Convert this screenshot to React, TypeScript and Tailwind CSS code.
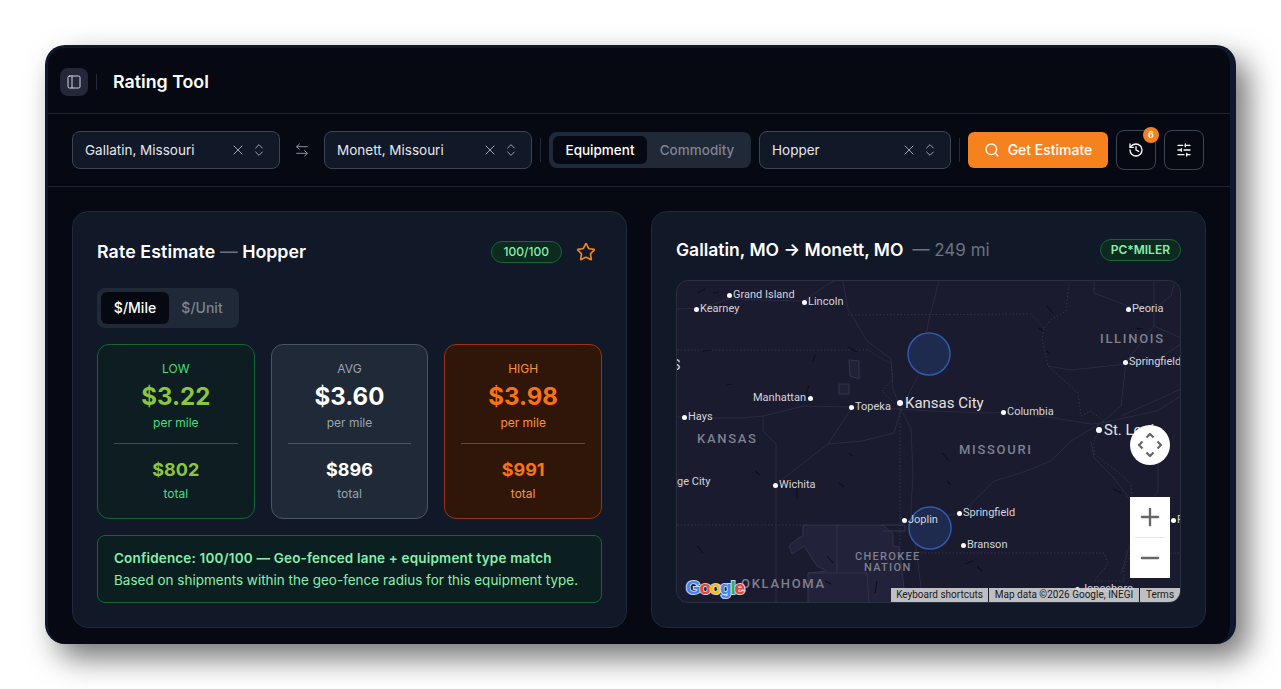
import {
  ArrowLeftRight,
  ChevronsUpDown,
  History,
  Minus,
  PanelLeft,
  Plus,
  Search,
  SlidersHorizontal,
  Star,
  X,
} from "lucide-react";

const cities = [
  { name: "Grand Island", x: 53, y: 14 },
  { name: "Lincoln", x: 128, y: 21 },
  { name: "Kearney", x: 20, y: 28 },
  { name: "Peoria", x: 452, y: 28 },
  { name: "Springfield", x: 449, y: 81 },
  { name: "Topeka", x: 175, y: 126 },
  { name: "Columbia", x: 327, y: 131 },
  { name: "Hays", x: 8, y: 136 },
  { name: "Wichita", x: 99, y: 204 },
  { name: "Joplin", x: 228, y: 239 },
  { name: "Springfield", x: 283, y: 232 },
  { name: "Branson", x: 287, y: 264 },
  { name: "F", x: 497, y: 239 },
  { name: "Jonesboro", x: 401, y: 308 },
];

const states = [
  { name: "ILLINOIS", x: 423, y: 58 },
  { name: "KANSAS", x: 20, y: 158 },
  { name: "MISSOURI", x: 282, y: 169 },
  { name: "OKLAHOMA", x: 64, y: 303 },
];

const roads = [
  "M0 28 L25 27 L51 18 L127 20 L151 3 L158 0",
  "M166 0 L171 28 L190 60 L214 78 L216 108 L224 128",
  "M0 136 L37 137 L64 137 L86 135 L127 125 L174 126 L224 128",
  "M86 135 L86 150 L99 163 L99 203 L99 323",
  "M99 203 L151 163 L174 128",
  "M151 163 L185 160 L217 152 L224 128",
  "M224 128 L234 148 L236 193 L234 227 L246 323",
  "M224 128 L241 95 L252 38 L262 0",
  "M224 128 L254 130 L314 132 L333 131 L377 137 L414 143 L424 142",
  "M424 142 L480 130 L504 115",
  "M424 142 L444 125 L449 81 L477 45 L504 57",
  "M371 85 L394 89 L449 83 L481 78 L504 63",
  "M417 0 L417 12 L451 25 L477 28 L494 15 L498 0",
  "M477 0 L477 45",
  "M234 240 L284 232 L304 213 L317 200 L344 192 L374 180 L394 160 L424 142",
  "M414 160 L417 177 L437 197 L454 220",
  "M481 165 L481 210 L474 220 L454 260 L444 293",
  "M504 108 L444 135",
];

const borders = [
  "M0 69 L191 69 L205 78 L214 82 L216 98 L205 110 L220 125",
  "M171 34 L354 33 L367 47 L365 58 L371 85 L401 112 L404 135 L414 130 L427 140",
  "M367 47 L375 38 L389 30 L392 2",
  "M223 128 L223 272",
  "M0 244 L126 244",
  "M216 272 L427 272 L431 283 L417 300 L447 300 L447 287 L454 273 L504 272",
  "M427 140 L417 160 L417 173 L440 190 L454 203 L455 215",
];

const marks = [
  "M20 12 L28 8", "M36 12 L42 11", "M25 70 L34 69", "M171 66 L180 71", "M136 80 L138 74",
  "M50 104 L55 103", "M132 105 L129 112 L134 120", "M370 25 L376 32", "M362 47 L366 50",
  "M370 70 L373 73", "M466 22 L464 35", "M458 47 L466 48", "M78 190 L83 194", "M120 203 L120 218",
  "M20 265 L26 272", "M162 202 L167 206", "M175 175 L172 172", "M150 275 L156 282",
  "M148 300 L154 303", "M194 277 L190 290", "M200 300 L198 312", "M270 200 L274 204",
  "M265 172 L272 180", "M300 285 L305 290", "M296 280 L288 283", "M436 208 L444 212",
];

function Field({ value, width }: { value: string; width: string }) {
  return (
    <div className={`${width} h-[38px] shrink-0 flex items-center justify-between pl-3 pr-3 rounded-lg border border-[#3d4454] bg-[#111827]`}>
      <span className="text-[13.5px] text-[#e5e7eb]">{value}</span>
      <div className="flex items-center gap-[5px]">
        <X className="w-4 h-4 text-[#9ca3af]" strokeWidth={1.5} />
        <ChevronsUpDown className="w-4 h-4 text-[#9ca3af]" strokeWidth={1.5} />
      </div>
    </div>
  );
}

function RateBox({
  label,
  rate,
  total,
  box,
  labelColor,
  valueColor,
  line,
}: {
  label: string;
  rate: string;
  total: string;
  box: string;
  labelColor: string;
  valueColor: string;
  line: string;
}) {
  return (
    <div className={`flex flex-col items-center rounded-xl border px-4 pt-4 ${box}`}>
      <div className={`text-xs leading-4 ${labelColor}`}>{label}</div>
      <div className={`text-2xl leading-8 mt-1 font-bold ${valueColor}`}>{rate}</div>
      <div className={`text-xs leading-4 mt-[2px] ${labelColor}`}>per mile</div>
      <div className={`w-full h-px mt-3 ${line}`} />
      <div className={`text-lg leading-7 mt-3 font-bold ${valueColor}`}>{total}</div>
      <div className={`text-xs leading-4 mt-[2px] ${labelColor}`}>total</div>
    </div>
  );
}

function Lane() {
  return (
    <div className="relative flex-1 overflow-hidden rounded-xl border border-[#2a3040] bg-[#1a1b2e] font-['Roboto',sans-serif]">
      <svg className="absolute inset-0" width="505" height="323" viewBox="0 0 505 323" fill="none">
        <path
          d="M126 244 L206 244 L216 253 L216 265 L222 266 L229 323 L131 323 L131 292 L150 290 L140 285 L127 265 L115 273 L112 265 L120 258 L126 255 Z"
          fill="#22223a"
          stroke="#32334a"
        />
        <path d="M160 244 L160 292 M131 292 L190 292 L192 323 M205 244 L228 244 L228 250 L206 250" stroke="#32334a" />
        <path d="M172 79 L182 80 L182 98 L173 95 Z M162 103 H172 V113 H162 Z" fill="#202137" stroke="#34354c" />
        {roads.map((d) => (
          <path key={d} d={d} stroke="#2a2b42" />
        ))}
        {borders.map((d) => (
          <path key={d} d={d} stroke="#34354b" strokeDasharray="1.5 2" />
        ))}
        {marks.map((d) => (
          <path key={d} d={d} stroke="#0d0e1c" strokeWidth="1.1" />
        ))}
        <circle cx="252" cy="73" r="21" fill="#1e2a4e" stroke="#2f5aa8" strokeWidth="1.5" />
        <circle cx="253" cy="247" r="21" fill="#1e2a4e" stroke="#2f5aa8" strokeWidth="1.5" />
      </svg>

      {cities.map((c) => (
        <div
          key={c.name + c.x}
          className="absolute flex items-center gap-[1px] -translate-y-1/2 whitespace-nowrap text-[11px] leading-3 text-[#d4d5dc]"
          style={{ left: c.x - 3, top: c.y }}
        >
          <span className="w-[5px] h-[5px] rounded-full bg-white" />
          {c.name}
        </div>
      ))}
      <div className="absolute left-[76px] top-[111px] text-[11px] leading-3 text-[#d4d5dc]">Manhattan</div>
      <span className="absolute left-[131px] top-[115px] w-[5px] h-[5px] rounded-full bg-white" />
      <div className="absolute left-0 top-[195px] text-[11px] leading-3 text-[#d4d5dc]">ge City</div>
      <div className="absolute left-[-5px] top-[76px] text-[14px] leading-4 text-[#d4d5dc]">S</div>

      <div className="absolute left-[220px] top-[114px] flex items-center gap-[2px] whitespace-nowrap text-[15px] leading-4 text-[#e2e3e8]">
        <span className="w-[6px] h-[6px] rounded-full bg-white" />
        Kansas City
      </div>
      <div className="absolute left-[419px] top-[141px] flex items-center gap-[2px] whitespace-nowrap text-[15px] leading-4 text-[#e2e3e8]">
        <span className="w-[6px] h-[6px] rounded-full bg-white" />
        St. Louis
      </div>

      {states.map((s) => (
        <div
          key={s.name}
          className="absolute whitespace-nowrap text-[13px] leading-4 font-medium tracking-[1.7px] text-[#7f8090]"
          style={{ left: s.x, top: s.y - 8 }}
        >
          {s.name}
        </div>
      ))}
      <div className="absolute left-[178px] top-[270px] text-center text-[11px] leading-[11px] font-medium tracking-[1.3px] text-[#7f8090]">
        CHEROKEE
        <br />
        NATION
      </div>

      <div className="absolute left-[9px] top-[295px] font-['Liberation_Sans',sans-serif] text-[19px] leading-6 font-bold tracking-[-1.3px] [-webkit-text-stroke:2px_#c9d2e0] [paint-order:stroke_fill]">
        <span className="text-[#4285f4]">G</span>
        <span className="text-[#ea4335]">o</span>
        <span className="text-[#fbbc05]">o</span>
        <span className="text-[#4285f4]">g</span>
        <span className="text-[#34a853]">l</span>
        <span className="text-[#ea4335]">e</span>
      </div>

      <div className="absolute right-[10px] top-[144px] w-10 h-10 rounded-full bg-white flex items-center justify-center">
        <svg width="24" height="24" viewBox="0 0 24 24" fill="none" stroke="#666" strokeWidth="2.2">
          <path d="M8.5 4.5 L12 1 L15.5 4.5 M8.5 19.5 L12 23 L15.5 19.5 M4.5 8.5 L1 12 L4.5 15.5 M19.5 8.5 L23 12 L19.5 15.5" />
        </svg>
      </div>

      <div className="absolute right-[10px] top-[216px] w-10 h-[81px] bg-white flex flex-col items-center">
        <div className="h-10 flex items-center justify-center">
          <Plus className="w-7 h-7 text-[#666]" strokeWidth={2} />
        </div>
        <div className="w-[30px] h-px bg-[#e6e6e6]" />
        <div className="h-10 flex items-center justify-center">
          <Minus className="w-7 h-7 text-[#666]" strokeWidth={2} />
        </div>
      </div>

      <div className="absolute right-0 bottom-0 h-[14px] flex gap-px text-[10px] leading-[14px] text-[#1a1a1a]">
        <div className="w-[97px] text-center bg-[#d0d0d4]/90">Keyboard shortcuts</div>
        <div className="w-[150px] text-center bg-[#d0d0d4]/90">Map data ©2026 Google, INEGI</div>
        <div className="w-[40px] text-center bg-[#d0d0d4]/90">Terms</div>
      </div>
    </div>
  );
}

export default function App() {
  return (
    <div className="h-[689px] overflow-hidden bg-white pl-[45px] pt-[45px] font-['Inter',sans-serif]">
      <div className="w-[1191px] h-[599px] flex flex-col rounded-[20px] border-t-[3px] border-l-[3px] border-r-[6px] border-[#0f172a] bg-[#060912] text-white shadow-[12px_14px_30px_rgba(0,0,0,0.55)]">
        <header className="h-[66px] shrink-0 flex items-center pl-3 pt-[3px] border-b border-[#1f2433]">
          <button className="w-7 h-7 rounded-lg bg-[#24263a] flex items-center justify-center">
            <PanelLeft className="w-4 h-4 text-[#d1d5db]" strokeWidth={1.5} />
          </button>
          <div className="w-px h-4 mx-2 bg-[#23283a]" />
          <h1 className="ml-2 text-[17.8px] font-semibold">Rating Tool</h1>
        </header>

        <div className="h-[73px] shrink-0 flex items-center gap-2 px-6 border-b border-[#1f2433]">
          <Field value="Gallatin, Missouri" width="w-[208px]" />
          <button className="w-7 h-7 flex items-center justify-center">
            <ArrowLeftRight className="w-4 h-4 text-[#8a91a0]" strokeWidth={1.5} />
          </button>
          <Field value="Monett, Missouri" width="w-[208px]" />
          <div className="w-px h-6 bg-[#23283a]" />
          <div className="w-[202px] h-9 flex items-center p-1 rounded-lg bg-[#1f2937] text-[13.5px] font-medium">
            <div className="w-[94px] h-7 flex items-center justify-center rounded-md bg-[#060912]">Equipment</div>
            <div className="flex-1 text-center text-[#7d8492]">Commodity</div>
          </div>
          <Field value="Hopper" width="w-[192px]" />
          <div className="w-px h-6 bg-[#23283a]" />
          <button className="w-[140px] h-9 flex items-center justify-center gap-2 rounded-md bg-[#f6811f] text-sm font-medium">
            <Search className="w-4 h-4" strokeWidth={2} />
            Get Estimate
          </button>
          <button className="relative w-10 h-10 flex items-center justify-center rounded-lg border border-[#3d4454]">
            <History className="w-4 h-4" strokeWidth={2} />
            <span className="absolute -top-[4px] -right-[4px] w-4 h-4 flex items-center justify-center rounded-full bg-[#f6811f] text-[9px] font-semibold">
              6
            </span>
          </button>
          <button className="w-10 h-10 flex items-center justify-center rounded-lg border border-[#3d4454]">
            <SlidersHorizontal className="w-4 h-4" strokeWidth={2} />
          </button>
        </div>

        <div className="flex-1 grid grid-cols-2 gap-6 px-6 pt-6 pb-4">
          <section className="flex flex-col rounded-2xl border border-[#1e293b] bg-[#111827] p-6">
            <div className="h-8 mb-5 flex items-center justify-between">
              <h2 className="text-[17.8px] font-semibold">
                <span className="tracking-[0.1px]">Rate Estimate</span>{" "}
                <span className="font-normal text-[#6b7280]">—</span> Hopper
              </h2>
              <div className="flex items-center gap-[14px]">
                <span className="h-[22px] px-3 flex items-center rounded-full border border-[#166534] bg-[#0d2a20] text-xs font-medium text-[#86efac]">
                  100/100
                </span>
                <Star className="w-5 h-5 mr-[6px] text-[#f6811f]" strokeWidth={2} />
              </div>
            </div>

            <div className="w-[142px] h-10 mb-4 flex items-center p-1 rounded-lg bg-[#1f2937] text-sm font-medium">
              <div className="w-[68px] h-8 flex items-center justify-center rounded-md bg-[#060912]">$/Mile</div>
              <div className="flex-1 text-center text-[#7d8492]">$/Unit</div>
            </div>

            <div className="h-[175px] mb-4 grid grid-cols-3 gap-4">
              <RateBox
                label="LOW"
                rate="$3.22"
                total="$802"
                box="border-[#166534] bg-[#0e1d22]"
                labelColor="text-[#4ade80]"
                valueColor="text-[#8bc63f]"
                line="bg-[#166534]"
              />
              <RateBox
                label="AVG"
                rate="$3.60"
                total="$896"
                box="border-[#4b5563] bg-[#1f2937]"
                labelColor="text-[#9ca3af]"
                valueColor="text-white"
                line="bg-[#4b5563]"
              />
              <RateBox
                label="HIGH"
                rate="$3.98"
                total="$991"
                box="border-[#9a3412] bg-[#2f1609]"
                labelColor="text-[#fb923c]"
                valueColor="text-[#f97316]"
                line="bg-[#9a3412]"
              />
            </div>

            <div className="flex-1 flex flex-col justify-center rounded-lg border border-[#166534] bg-[#0c1f20] px-4 text-[13.5px] leading-[22px] text-[#86efac]">
              <div className="font-semibold tracking-[0.17px]">Confidence: 100/100 — Geo-fenced lane + equipment type match</div>
              <div>Based on shipments within the geo-fence radius for this equipment type.</div>
            </div>
          </section>

          <section className="flex flex-col rounded-2xl border border-[#1e293b] bg-[#111827] p-6">
            <div className="h-7 mb-4 flex items-center justify-between">
              <h2 className="mt-px text-[17.5px] font-semibold">
                Gallatin, MO → Monett, MO
                <span className="ml-[9px] text-[17px] font-normal text-[#6b7280]">— 249 mi</span>
              </h2>
              <span className="h-[22px] px-[10px] flex items-center rounded-full border border-[#166534] bg-[#0d2a20] text-xs font-semibold text-[#86efac]">
                PC*MILER
              </span>
            </div>
            <Lane />
          </section>
        </div>
      </div>
    </div>
  );
}
